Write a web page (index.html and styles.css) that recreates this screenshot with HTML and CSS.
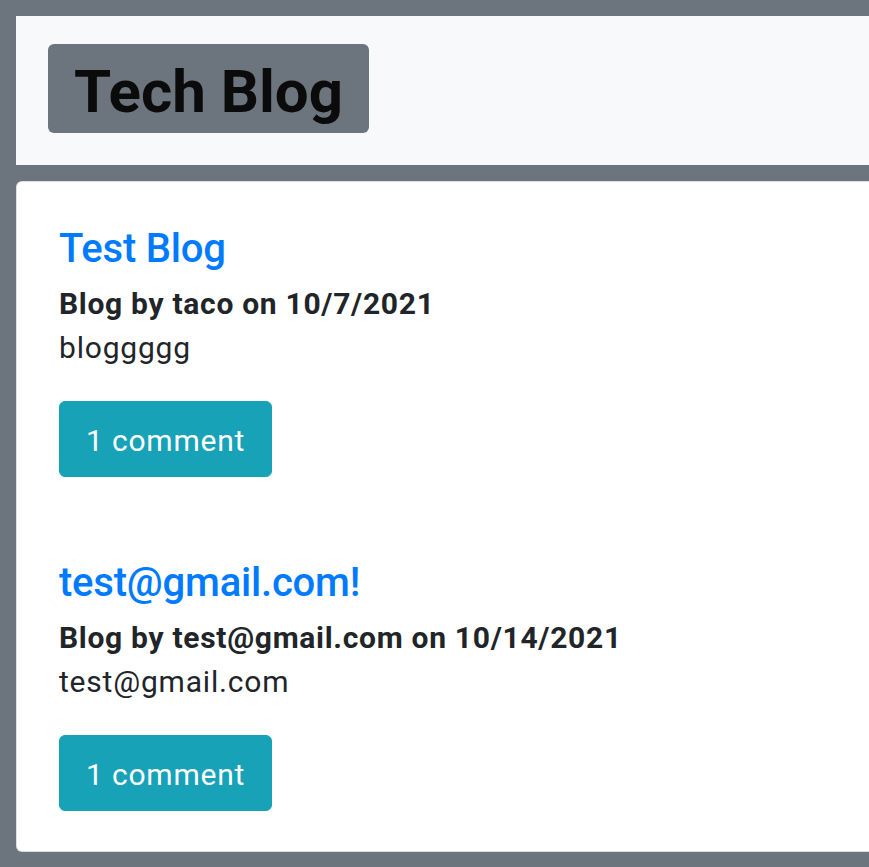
FILE: index.html
```html
<!DOCTYPE html>
<html lang="en">
<head>
<meta charset="utf-8">
<title>Tech Blog</title>
<link rel="stylesheet" href="styles.css">
</head>
<body>
<div class="page">
  <header class="navbar">
    <h1 class="brand">Tech Blog</h1>
  </header>
  <main class="card">
    <article class="post">
      <h3 class="post-title"><a href="#">Test Blog</a></h3>
      <p class="post-meta">Blog by taco on 10/7/2021</p>
      <p class="post-body">bloggggg</p>
      <button class="btn" type="button">1 comment</button>
    </article>
    <article class="post">
      <h3 class="post-title"><a href="#">test@gmail.com!</a></h3>
      <p class="post-meta">Blog by test@gmail.com on 10/14/2021</p>
      <p class="post-body">test@gmail.com</p>
      <button class="btn" type="button">1 comment</button>
    </article>
  </main>
</div>
</body>
</html>
```
FILE: styles.css
```css
html, body {
  margin: 0;
  padding: 0;
  overflow: hidden;
}
body {
  background: #6c757d;
  font-family: "Roboto", "Noto Sans", sans-serif;
  color: #212529;
}
.page {
  padding: 16px 0 15px 16px;
  margin-right: -40px;
}
.navbar {
  background: #f8f9fa;
  padding: 28px 32px 32px;
  display: flex;
}
.brand {
  margin: 0;
  background: #6c757d;
  color: #0b0b0b;
  font-size: 60px;
  line-height: 72px;
  font-weight: 700;
  padding: 12px 26px 5px;
  border-radius: 6px;
}
.card {
  display: block;
  margin-top: 16px;
  background: #fff;
  border: 1px solid rgba(0, 0, 0, .125);
  border-radius: 6px;
  padding: 44px 42px 40px;
}
.post + .post {
  margin-top: 83px;
}
.post-title {
  margin: 0 0 15px;
  font-size: 40px;
  line-height: 46px;
  font-weight: 500;
  letter-spacing: -0.2px;
}
.post-title a {
  color: #007bff;
  text-decoration: none;
}
.post-meta {
  margin: 0 0 5px;
  font-size: 30px;
  line-height: 34px;
  font-weight: 700;
  letter-spacing: 0.7px;
}
.post-body {
  margin: 0 0 31px;
  font-size: 30px;
  line-height: 44px;
  letter-spacing: 0.8px;
}
.btn {
  display: block;
  font-family: inherit;
  font-size: 30px;
  line-height: 34px;
  letter-spacing: 0.8px;
  color: #fff;
  background: #17a2b8;
  border: 1px solid #17a2b8;
  border-radius: 6px;
  padding: 22px 26px 18px;
  cursor: pointer;
}
```
